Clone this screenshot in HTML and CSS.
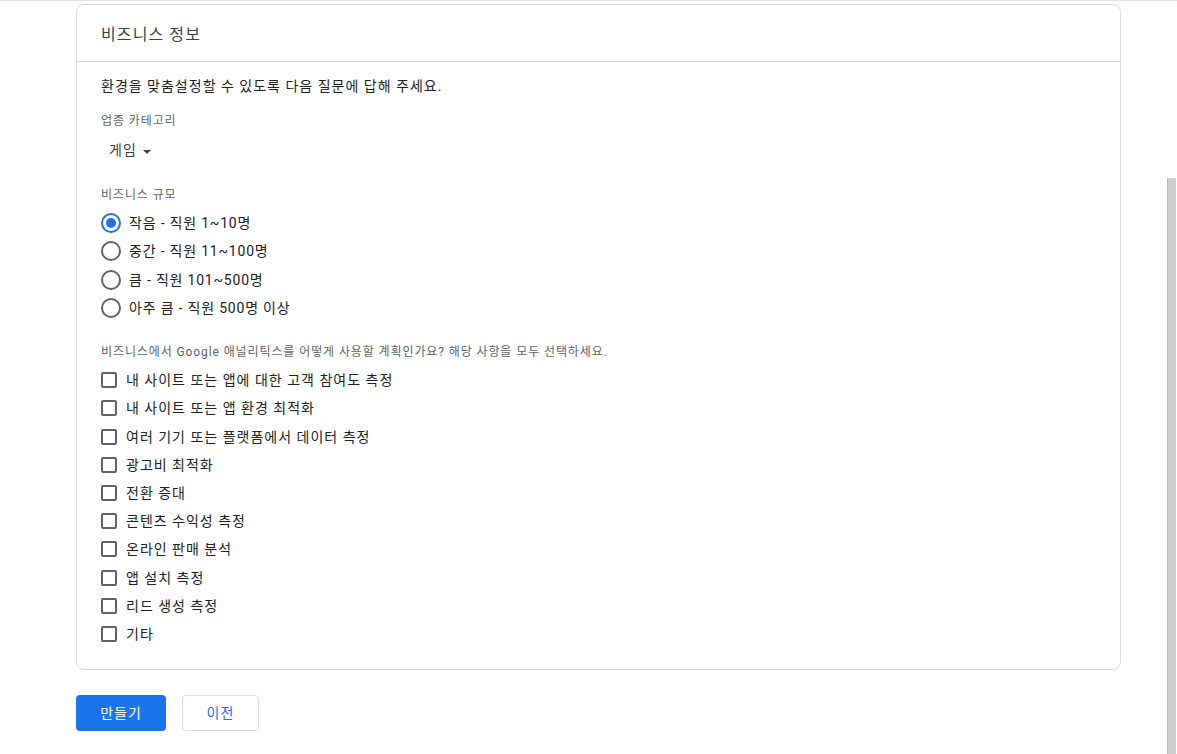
FILE: index.html
```html
<!DOCTYPE html>
<html lang="ko">
<head>
<meta charset="utf-8">
<title>비즈니스 정보</title>
<link rel="stylesheet" href="styles.css">
</head>
<body>
<div class="page">
  <section class="card">
    <header class="card-header">비즈니스 정보</header>
    <div class="card-body">
      <p class="intro">환경을 맞춤설정할 수 있도록 다음 질문에 답해 주세요.</p>

      <div class="field-label label-category">업종 카테고리</div>
      <div class="dropdown"><span>게임</span><span class="caret"></span></div>

      <div class="field-label label-size">비즈니스 규모</div>
      <div class="radio-group">
        <div class="option-row"><span class="radio checked"></span><span class="option-text radio-text">작음 - 직원 1~10명</span></div>
        <div class="option-row"><span class="radio"></span><span class="option-text radio-text">중간 - 직원 11~100명</span></div>
        <div class="option-row"><span class="radio"></span><span class="option-text radio-text">큼 - 직원 101~500명</span></div>
        <div class="option-row"><span class="radio"></span><span class="option-text radio-text">아주 큼 - 직원 500명 이상</span></div>
      </div>

      <div class="field-label label-usage">비즈니스에서 Google 애널리틱스를 어떻게 사용할 계획인가요? 해당 사항을 모두 선택하세요.</div>
      <div class="check-group">
        <div class="option-row check-row"><span class="checkbox"></span><span class="option-text check-text">내 사이트 또는 앱에 대한 고객 참여도 측정</span></div>
        <div class="option-row check-row"><span class="checkbox"></span><span class="option-text check-text">내 사이트 또는 앱 환경 최적화</span></div>
        <div class="option-row check-row"><span class="checkbox"></span><span class="option-text check-text">여러 기기 또는 플랫폼에서 데이터 측정</span></div>
        <div class="option-row check-row"><span class="checkbox"></span><span class="option-text check-text">광고비 최적화</span></div>
        <div class="option-row check-row"><span class="checkbox"></span><span class="option-text check-text">전환 증대</span></div>
        <div class="option-row check-row"><span class="checkbox"></span><span class="option-text check-text">콘텐츠 수익성 측정</span></div>
        <div class="option-row check-row"><span class="checkbox"></span><span class="option-text check-text">온라인 판매 분석</span></div>
        <div class="option-row check-row"><span class="checkbox"></span><span class="option-text check-text">앱 설치 측정</span></div>
        <div class="option-row check-row"><span class="checkbox"></span><span class="option-text check-text">리드 생성 측정</span></div>
        <div class="option-row check-row"><span class="checkbox"></span><span class="option-text check-text">기타</span></div>
      </div>
    </div>
  </section>

  <div class="actions">
    <button class="btn btn-primary" type="button">만들기</button>
    <button class="btn btn-secondary" type="button">이전</button>
  </div>
</div>
<div class="scroll-thumb"></div>
</body>
</html>
```

FILE: styles.css
```css
html, body {
  margin: 0;
  padding: 0;
  background: #ffffff;
  overflow: hidden;
}

body {
  font-family: Roboto, "Noto Sans CJK KR", sans-serif;
  color: #202124;
  border-top: 1px solid #e3e3e3;
  height: 753px;
}

.page {
  padding-top: 3px;
  margin-left: 76px;
  width: 1045px;
}

.card {
  border: 1px solid #dadce0;
  border-radius: 8px;
  box-sizing: border-box;
}

.card-header {
  height: 56px;
  display: flex;
  align-items: center;
  padding: 0 24px;
  font-size: 16px;
  letter-spacing: 1.1px;
  color: #3c4043;
  border-bottom: 1px solid #dadce0;
}

.card-body {
  padding: 14px 24px 21px 24px;
}

.intro {
  margin: 0;
  font-size: 14px;
  line-height: 20px;
  letter-spacing: 1px;
  color: #202124;
}

.field-label {
  font-size: 12px;
  line-height: 16px;
  letter-spacing: 0.9px;
  color: #5f6368;
}

.label-category {
  margin-top: 17px;
}

.dropdown {
  margin-top: 11px;
  margin-left: 8px;
  display: flex;
  align-items: center;
  font-size: 14px;
  line-height: 20px;
  letter-spacing: 1px;
  color: #3c4043;
}

.caret {
  margin-left: 6px;
  margin-top: 3px;
  width: 0;
  height: 0;
  border-left: 4px solid transparent;
  border-right: 4px solid transparent;
  border-top: 4px solid #3c4043;
}

.label-size {
  margin-top: 27px;
}

.radio-group {
  margin-top: 6px;
}

.option-row {
  height: 28.3px;
  display: flex;
  align-items: center;
}

.option-text {
  font-size: 14px;
  line-height: 20px;
  letter-spacing: 0.8px;
  color: #202124;
}

.radio {
  width: 20px;
  height: 20px;
  box-sizing: border-box;
  border: 2px solid #5f6368;
  border-radius: 50%;
  display: flex;
  align-items: center;
  justify-content: center;
  flex: none;
}

.radio.checked {
  border-color: #1a73e8;
}

.radio.checked::after {
  content: "";
  width: 10px;
  height: 10px;
  border-radius: 50%;
  background: #1a73e8;
}

.radio-text {
  margin-left: 8px;
}

.label-usage {
  margin-top: 22px;
}

.check-group {
  margin-top: 6px;
}

.check-row {
  height: 28.2px;
}

.check-text {
  margin-left: 9px;
  letter-spacing: 1px;
}

.checkbox {
  width: 16px;
  height: 16px;
  box-sizing: border-box;
  border: 2px solid #5f6368;
  border-radius: 2px;
  flex: none;
}

.actions {
  margin-top: 25px;
  display: flex;
  gap: 16px;
}

.btn {
  height: 36px;
  box-sizing: border-box;
  border-radius: 4px;
  font-family: Roboto, "Noto Sans CJK KR", sans-serif;
  font-size: 14px;
  line-height: 20px;
  letter-spacing: 1px;
  padding: 0;
  cursor: pointer;
}

.btn-primary {
  width: 90px;
  background: #1a73e8;
  border: none;
  color: #ffffff;
}

.btn-secondary {
  width: 77px;
  background: #ffffff;
  border: 1px solid #dadce0;
  color: #1a73e8;
}

.scroll-thumb {
  position: fixed;
  right: 1px;
  top: 178px;
  bottom: 0;
  width: 9px;
  background: #cdcdcd;
  box-shadow: inset 1px 0 0 #bdbdbd;
}
```
